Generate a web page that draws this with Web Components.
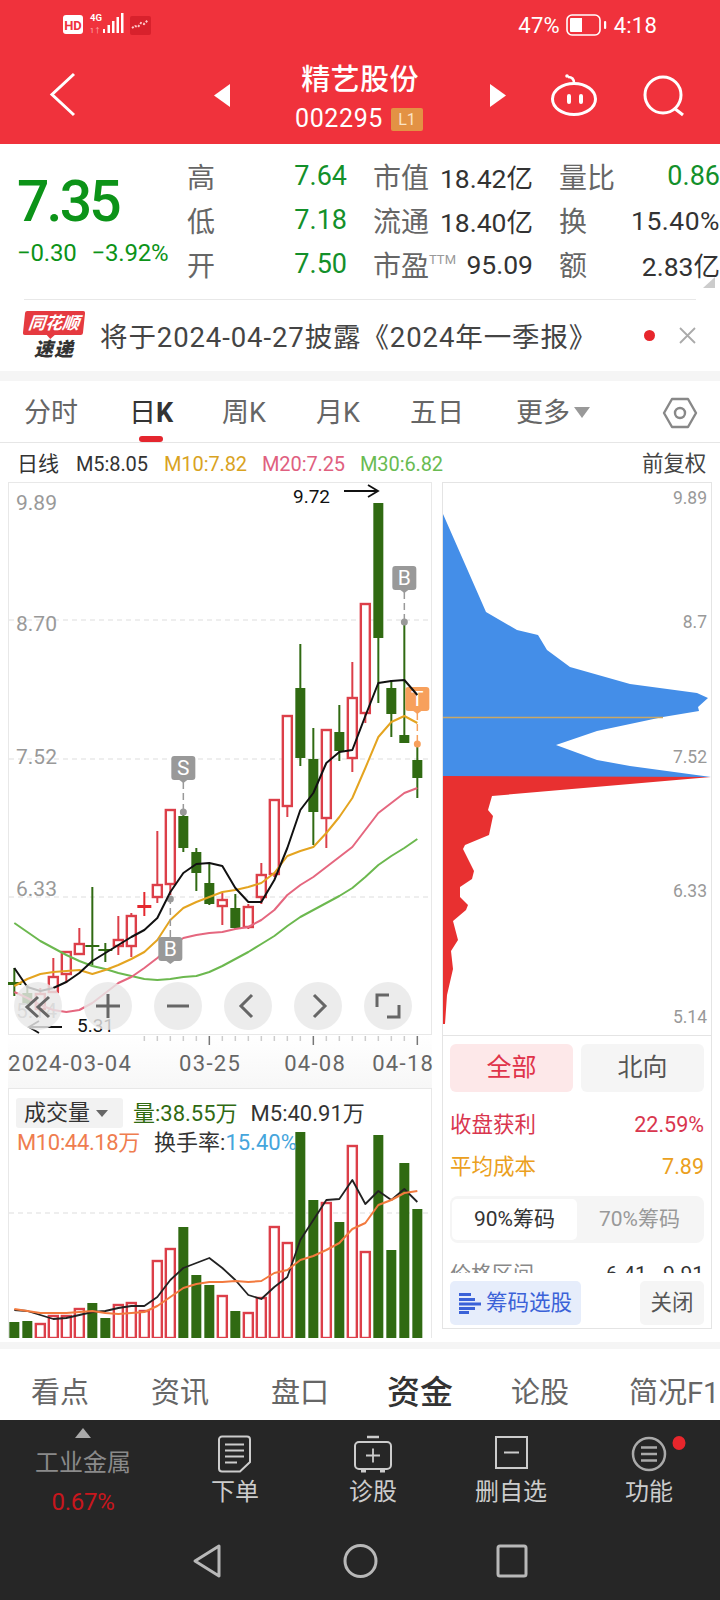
<!DOCTYPE html>
<html lang="zh">
<head>
<meta charset="utf-8">
<title>精艺股份</title>
<style>
  html, body { margin: 0; padding: 0; background: #fff; }
  body {
    width: 720px;
    height: 1600px;
    overflow: hidden;
    font-family: Roboto, "Noto Sans CJK SC", sans-serif;
    color: #333;
    display: flex;
    flex-direction: column;
  }
</style>
</head>
<body>
  <stock-header name="精艺股份" code="002295"></stock-header>
  <quote-panel></quote-panel>
  <notice-bar>将于2024-04-27披露《2024年一季报》</notice-bar>
  <gray-strip height="10"></gray-strip>
  <period-tabs></period-tabs>
  <ma-legend></ma-legend>
  <chart-area>
    <kline-chart slot="left"></kline-chart>
    <date-axis slot="left"></date-axis>
    <volume-chart slot="left"></volume-chart>
    <chip-panel slot="right"></chip-panel>
  </chart-area>
  <gray-strip height="7"></gray-strip>
  <detail-tabs></detail-tabs>
  <bottom-bar></bottom-bar>

<script>
const GREEN = '#306a12';
const RED = '#dc3f49';

function define(name, html, init) {
  const template = document.createElement('template');
  template.innerHTML = html;
  customElements.define(name, class extends HTMLElement {
    constructor() {
      super();
      this.attachShadow({ mode: 'open' });
      this.shadowRoot.appendChild(template.content.cloneNode(true));
    }
    connectedCallback() {
      if (init) init(this.shadowRoot, this);
    }
  });
}

const X = i => 14.33 + 13 * i;
const line = (ys, color, width) =>
  `<polyline points="${ys.map((y, i) => X(i) + ',' + y).join(' ')}" fill="none" stroke="${color}" stroke-width="${width}" stroke-linejoin="round"/>`;
const dashed = (y, x1, x2) =>
  `<line x1="${x1}" x2="${x2}" y1="${y}" y2="${y}" stroke="#ddd" stroke-width="1" stroke-dasharray="5 4"/>`;

// type, high, body top, body bottom, low (page pixels)
const candles = [
  ['g', 968, 982, 985, 996], ['g', 985, 993, 1003, 1004], ['r', 988, 993, 1010, 1012],
  ['r', 958, 976, 993, 993], ['r', 951, 951, 975, 983], ['r', 928, 943, 955, 955],
  ['g', 887, 945, 947, 965], ['g', 943, 949, 951, 962], ['r', 916, 939, 947, 955],
  ['r', 913, 915, 947, 957], ['s', 892, 905, 908, 916], ['r', 831, 884, 898, 903],
  ['r', 809, 809, 885, 895], ['g', 812, 816, 848, 852], ['g', 848, 852, 873, 891],
  ['g', 863, 883, 904, 905], ['r', 893, 899, 907, 925], ['g', 894, 908, 928, 929],
  ['r', 904, 906, 928, 929], ['r', 863, 874, 898, 904], ['r', 799, 799, 875, 877],
  ['r', 715, 715, 807, 817], ['g', 644, 688, 758, 766], ['g', 728, 759, 812, 845],
  ['r', 729, 729, 819, 848], ['g', 705, 732, 751, 761], ['r', 662, 697, 759, 772],
  ['r', 603, 603, 714, 723], ['g', 503, 503, 638, 703], ['g', 680, 688, 714, 737],
  ['g', 623, 735, 743, 743], ['g', 744, 760, 778, 798],
];
const ma5 = [968,987,991,988,982,973,961,953,945,937,930,918,892,873,864,863,866,888,902,902,880,848,810,793,763,752,750,716,683,681,680,695];
const ma10 = [986,979,974,972,971,970,974,970,965,959,952,940,920,908,902,897,892,890,887,883,873,856,851,847,833,817,798,768,737,722,716,723];
const ma20 = [992,998,1005,1010,1012,1010,1003,993,983,977,968,958,947,938,935,933,932,929,927,920,910,895,885,877,867,857,847,830,813,803,793,788];
const ma30 = [923,932,941,948,955,961,966,969,973,976,979,980,979,977,976,972,966,959,952,944,936,926,917,910,903,896,888,877,865,856,848,839];

function candleSvg([type, high, top, bottom, low], i) {
  const x = X(i);
  if (type === 'r') {
    return `<path d="M${x} ${high}V${top}M${x} ${bottom}V${low}" stroke="${RED}" stroke-width="2"/>` +
      `<rect x="${x - 4.5}" y="${top + 1}" width="9" height="${bottom - top - 2}" fill="#fff" stroke="${RED}" stroke-width="2.4"/>`;
  }
  const color = type === 'g' ? GREEN : '#e4282e';
  const w = bottom - top < 5 ? 14 : 10;
  return `<path d="M${x} ${high}V${low}" stroke="${color}" stroke-width="2"/>` +
    `<rect x="${x - w / 2}" y="${top}" width="${w}" height="${bottom - top}" fill="${color}"/>`;
}

// grey or orange flag with a dashed stem to a dot
function flag(x, boxTop, label, color, stemFrom, dot) {
  return `<path d="M${x} ${stemFrom}V${dot}" stroke="${color}" stroke-width="1.5" stroke-dasharray="7 4"/>` +
    `<circle cx="${x}" cy="${dot}" r="3.5" fill="${color}"/>` +
    `<rect x="${x - 12}" y="${boxTop}" width="24" height="24" rx="3" fill="${color}"/>` +
    `<path d="M${x - 4} ${boxTop + 24}H${x + 4}L${x} ${boxTop + 27}Z" fill="${color}"/>` +
    `<text x="${x}" y="${boxTop + 19}" text-anchor="middle" font-size="21" fill="#fff">${label}</text>`;
}

define('gray-strip', `
  <style>:host { display: block; background: #f5f5f5; flex: none; }</style>
`, (root, el) => { el.style.height = el.getAttribute('height') + 'px'; });

define('stock-header', `
  <style>
    :host { display: block; flex: none; height: 144px; background: #f0323c; color: #fff; position: relative; }
    #status { height: 50px; display: flex; align-items: center; padding: 0 63px; position: relative; }
    #status svg { display: block; }
    #right { margin-left: auto; display: flex; align-items: center; font-size: 22px; margin-right: 0; }
    #right span { letter-spacing: .2px; }
    #nav { height: 94px; position: relative; display: flex; justify-content: center; }
    #title { text-align: center; padding-top: 9px; }
    #name { font-size: 29px; font-weight: 500; line-height: 42px; letter-spacing: .4px; }
    #code { font-size: 25px; line-height: 36px; display: flex; align-items: center; justify-content: center; gap: 8px; letter-spacing: .6px; margin-left: -2px; }
    #badge { width: 32px; height: 23px; background: #e39244; color: #fbe3c6; font-size: 16px; line-height: 23px; border-radius: 2px; text-align: center; letter-spacing: 0; }
    .icons { position: absolute; left: 0; top: 0; pointer-events: none; }
  </style>
  <div id="status">
    <svg width="95" height="26" viewBox="0 0 95 26">
      <rect x="0" y="3" width="20" height="19" rx="3" fill="#fff"/>
      <text x="10" y="17.5" text-anchor="middle" font-size="13" font-weight="700" fill="#f0323c">HD</text>
      <text x="27" y="9" font-size="9.5" font-weight="700" fill="#fff">4G</text>
      <text x="27" y="21" font-size="7" fill="#ffb9bd">1↑</text>
      <rect x="40" y="17" width="2" height="4" fill="#fff"/>
      <rect x="44.5" y="13" width="2.5" height="8" fill="#fff"/>
      <rect x="49" y="9" width="2.5" height="12" fill="#fff"/>
      <rect x="53.5" y="5" width="2.5" height="16" fill="#fff"/>
      <rect x="58" y="1" width="2.5" height="20" fill="#fff"/>
      <rect x="67" y="4" width="21" height="19" rx="2" fill="#d8212c"/>
      <path d="M69 16l3-2 3 1 3-4 3 1 4-4" fill="none" stroke="#ffc9c9" stroke-width="2" stroke-dasharray="2 1.5"/>
    </svg>
    <div id="right">
      <span>47%</span>
      <svg width="42" height="22" viewBox="0 0 42 22" style="margin:0 6px 0 6px">
        <rect x="1" y="1" width="33" height="20" rx="5" fill="none" stroke="#fff" stroke-width="1.6"/>
        <path d="M5 4h11v14H5a1 1 0 0 1-1-1V5a1 1 0 0 1 1-1z" fill="#fff"/>
        <rect x="38" y="7" width="2.2" height="8" rx="1" fill="#fff"/>
      </svg>
      <span>4:18</span>
    </div>
  </div>
  <div id="nav">
    <svg class="icons" width="720" height="94" viewBox="0 50 720 94">
      <path d="M74 74L52 94.500L74 115" fill="none" stroke="#fff" stroke-width="3"/>
      <path d="M230 84V107L214 95.500Z" fill="#fff"/>
      <path d="M490 84V107L506 95.500Z" fill="#fff"/>
      <ellipse cx="574" cy="99" rx="21.500" ry="15.500" fill="none" stroke="#fff" stroke-width="3"/>
      <path d="M574 83C574 79 572 77 568 77" fill="none" stroke="#fff" stroke-width="2.500"/>
      <circle cx="567" cy="76" r="1.800" fill="#fff"/>
      <path d="M569 96v6M581 96v6" stroke="#fff" stroke-width="4" stroke-linecap="round"/>
      <circle cx="663" cy="95" r="18" fill="none" stroke="#fff" stroke-width="3"/>
      <path d="M674 108L683 115" stroke="#fff" stroke-width="3"/>
    </svg>
    <div id="title">
      <div id="name"></div>
      <div id="code"><span id="num"></span><span id="badge">L1</span></div>
    </div>
  </div>
`, (root, el) => {
  root.getElementById('name').textContent = el.getAttribute('name');
  root.getElementById('num').textContent = el.getAttribute('code');
});

define('quote-panel', `
  <style>
    :host { display: flex; flex: none; height: 155px; position: relative; box-sizing: border-box; padding-top: 10px; }
    #price { width: 187px; padding-left: 17px; box-sizing: border-box; color: #0c9318; }
    #now { font-size: 57px; font-weight: 500; letter-spacing: -2.8px; line-height: 60px; margin-top: 18px; }
    #chg { display: flex; gap: 15px; font-size: 24px; line-height: 26px; margin-top: 8px; letter-spacing: -.2px; white-space: nowrap; }
    #table { display: grid; grid-template-columns: 160px 160px 161px; column-gap: 26px; grid-auto-rows: 44px; }
    .cell { display: flex; justify-content: space-between; align-items: center; white-space: nowrap; }
    .k { font-size: 28px; color: #666; }
    .k sup { font-size: 13px; color: #999; vertical-align: 12px; line-height: 0; }
    .v { font-size: 26.500px; color: #333; }
    .g { color: #13902a; font-size: 27px; }
    #corner { position: absolute; right: 5px; bottom: 11px; width: 0; height: 0; border-left: 12px solid transparent; border-bottom: 11px solid #ccc; }
  </style>
  <div id="price">
    <div id="now">7.35</div>
    <div id="chg"><span>−0.30</span><span>−3.92%</span></div>
  </div>
  <div id="table">
    <div class="cell"><span class="k">高</span><span class="v g">7.64</span></div>
    <div class="cell"><span class="k">市值</span><span class="v">18.42亿</span></div>
    <div class="cell"><span class="k">量比</span><span class="v g">0.86</span></div>
    <div class="cell"><span class="k">低</span><span class="v g">7.18</span></div>
    <div class="cell"><span class="k">流通</span><span class="v">18.40亿</span></div>
    <div class="cell"><span class="k">换</span><span class="v" style="letter-spacing:.5px">15.40%</span></div>
    <div class="cell"><span class="k">开</span><span class="v g">7.50</span></div>
    <div class="cell"><span class="k">市盈<sup>TTM</sup></span><span class="v">95.09</span></div>
    <div class="cell"><span class="k">额</span><span class="v">2.83亿</span></div>
  </div>
  <div id="corner"></div>
`);

define('notice-bar', `
  <style>
    :host { display: flex; flex: none; height: 72px; margin: 0 24px; border-top: 1px solid #e8e8e8; box-sizing: border-box; align-items: center; position: relative; }
    #logo { width: 60px; flex: none; margin-right: 16px; text-align: center; }
    #top { position: relative; height: 24px; background: #e53a40; color: #fff; font-size: 17px; line-height: 24px; font-weight: 700; font-style: italic; transform: skewX(-6deg); border-radius: 2px; white-space: nowrap; }
    #top:after { content: ""; position: absolute; left: 24px; top: 24px; border: 4px solid transparent; border-top-color: #e53a40; border-bottom: 0; }
    #bottom { font-size: 19px; line-height: 20px; margin-top: 5px; font-weight: 900; font-style: italic; color: #333; letter-spacing: 1px; }
    #text { font-size: 27.500px; color: #444; white-space: nowrap; flex: 1; letter-spacing: .9px; padding-bottom: 2px; }
    #dot { width: 11px; height: 11px; border-radius: 50%; background: #e7262c; margin-right: 24px; }
    svg { display: block; }
  </style>
  <div id="logo"><div id="top">同花顺</div><div id="bottom">速递</div></div>
  <div id="text"><slot></slot></div>
  <div id="dot"></div>
  <svg width="17" height="17" viewBox="0 0 17 17"><path d="M1 1L16 16M16 1L1 16" stroke="#aaa" stroke-width="1.800"/></svg>
`);

define('period-tabs', `
  <style>
    :host { display: flex; flex: none; height: 62px; box-sizing: border-box; border-bottom: 1px solid #e6e6e6; font-size: 27px; color: #666; align-items: center; position: relative; }
    span { position: absolute; top: 13px; line-height: 38px; white-space: nowrap; }
    b { color: #333; font-weight: 700; }
    i { position: absolute; left: 139px; bottom: 0; width: 24px; height: 6px; border-radius: 3px; background: #e4262e; }
    em { display: inline-block; width: 0; height: 0; border: 8px solid transparent; border-top: 11px solid #999; border-bottom: 0; margin-left: 4px; vertical-align: 4px; }
    svg { position: absolute; left: 662px; top: 15px; }
  </style>
  <span style="left:24px">分时</span>
  <span style="left:129px;color:#333">日<b>K</b></span>
  <span style="left:222px">周K</span>
  <span style="left:316px">月K</span>
  <span style="left:410px">五日</span>
  <span style="left:516px">更多<em></em></span>
  <i></i>
  <svg width="36" height="34" viewBox="0 0 36 34" fill="none" stroke="#888" stroke-width="2.400"><path d="M10 3H26L34 17L26 31H10L2 17Z" stroke-linejoin="round"/><circle cx="18" cy="17" r="5"/></svg>
`);

define('ma-legend', `
  <style>
    :host { display: flex; flex: none; height: 39px; align-items: center; font-size: 20px; position: relative; white-space: nowrap; letter-spacing: -.1px; color: #333; }
    span { position: absolute; top: 9px; line-height: 24px; }
  </style>
  <span style="left:17px;font-size:21px">日线</span>
  <span style="left:76px">M5:8.05</span>
  <span style="left:164px;color:#d9a31f">M10:7.82</span>
  <span style="left:262px;color:#e0607f">M20:7.25</span>
  <span style="left:360px;color:#69bb52">M30:6.82</span>
  <span style="left:642px;font-size:21.500px;color:#444">前复权</span>
`);

define('chart-area', `
  <style>
    :host { display: flex; flex: none; height: 860px; padding-left: 8px; }
    #left { width: 424px; display: flex; flex-direction: column; }
    #right { width: 270px; margin-left: 10px; }
  </style>
  <div id="left"><slot name="left"></slot></div>
  <div id="right"><slot name="right"></slot></div>
`);

const roundBtn = inner =>
  `<div class="btn"><svg width="48" height="48" viewBox="0 0 48 48" fill="none" stroke="#666" stroke-width="2.500">${inner}</svg></div>`;

define('kline-chart', `
  <style>
    :host { display: block; flex: none; height: 553px; position: relative; box-sizing: border-box; }
    svg#c { display: block; position: absolute; left: 0; top: 0; font-family: Roboto, sans-serif; }
    #btns { position: absolute; left: 6px; top: 500px; display: flex; gap: 22px; }
    .btn { width: 48px; height: 48px; border-radius: 50%; background: rgba(232,232,232,.82); }
    .btn svg { display: block; }
  </style>
  <svg id="c" width="424" height="553" viewBox="8 482 424 553"></svg>
  <div id="btns">
    ${roundBtn('<path d="M24 15L13 25L24 35M35 15L24 25L35 35" stroke-width="3"/>')}
    ${roundBtn('<path d="M12 24H36M24 12V36" stroke-width="3"/>')}
    ${roundBtn('<path d="M13 24H35" stroke-width="3"/>')}
    ${roundBtn('<path d="M28 13L17 24L28 35" stroke-width="3"/>')}
    ${roundBtn('<path d="M20 13L31 24L20 35" stroke-width="3"/>')}
    ${roundBtn('<path d="M25 13H13V25M35 23V35H23" stroke-width="3"/>')}
  </div>
`, root => {
  const labels = [['9.89', 510], ['8.70', 631], ['7.52', 764], ['6.33', 896], ['5.14', 1018]];
  root.getElementById('c').innerHTML =
    `<rect x="8.500" y="482.500" width="423" height="552" fill="#fff" stroke="#e8e8e8"/>` +
    [620, 759, 897].map(y => dashed(y, 9, 431)).join('') +
    labels.map(([t, y]) => `<text x="16" y="${y}" font-size="21" fill="#999">${t}</text>`).join('') +
    candles.map(candleSvg).join('') +
    line(ma30, '#6cb84f', 2) + line(ma20, '#e5677f', 2) + line(ma10, '#e4a420', 2) +
    flag(X(12), 937, 'B', '#999', 937, 899) + flag(X(13), 756, 'S', '#999', 782, 812) +
    flag(X(30), 566, 'B', '#999', 592, 622) + flag(X(31), 687, 'T', '#f7a05c', 713, 744) +
    line(ma5, '#111', 2) +
    `<text x="293" y="503" font-size="19" fill="#111">9.72</text>
     <path d="M344 491H378M368 485L378 491L368 497" fill="none" stroke="#111" stroke-width="1.800"/>
     <text x="77" y="1032" font-size="19" fill="#111">5.31</text>
     <path d="M62 1027H29M39 1021L29 1027L39 1033" fill="none" stroke="#111" stroke-width="1.800"/>`;
});

define('date-axis', `
  <style>
    :host { display: block; flex: none; height: 53px; background: linear-gradient(#fff, #f7f7f7); position: relative; }
    svg { position: absolute; left: 0; top: 0; display: block; }
    #dates { display: flex; padding-top: 14px; font-size: 22px; line-height: 30px; color: #666; letter-spacing: 1.300px; white-space: nowrap; }
  </style>
  <svg id="t" width="424" height="12" viewBox="8 1035 424 12"></svg>
  <div id="dates">
    <span>2024-03-04</span>
    <span style="margin-left:47px">03-25</span>
    <span style="margin-left:43px">04-08</span>
    <span style="margin-left:26px">04-18</span>
  </div>
`, root => {
  let ticks = '';
  for (let i = 10; i < 32; i++) {
    const major = (i - 31) % 8 === 0;
    ticks += `<line x1="${X(i)}" x2="${X(i)}" y1="1036" y2="${major ? 1045 : 1041}" stroke="${major ? '#777' : '#ccc'}" stroke-width="1.500"/>`;
  }
  root.getElementById('t').innerHTML = ticks;
});

const volumes = [1322,1321,1323,1315,1315,1308,1303,1318,1304,1302,1310,1260,1248,1227,1275,1285,1295,1311,1312,1297,1226,1242,1132,1200,1202,1222,1145,1251,1135,1250,1163,1209];
const volUp = [0,0,1,1,1,1,0,0,1,1,1,1,1,0,0,0,1,0,1,1,1,1,0,0,1,0,1,1,0,0,0,0];
const volMa5 = [1310,1311,1315,1319,1318,1315,1312,1311,1308,1306,1306,1297,1280,1268,1263,1258,1268,1280,1295,1299,1287,1277,1240,1220,1200,1199,1180,1204,1191,1200,1189,1202];
const volMa10 = [1309,1311,1313,1313,1313,1312,1311,1313,1314,1313,1312,1306,1297,1288,1284,1282,1282,1281,1282,1281,1273,1270,1260,1256,1250,1243,1229,1223,1205,1200,1193,1191];

define('volume-chart', `
  <style>
    :host { display: block; flex: none; height: 250px; position: relative; }
    svg { position: absolute; left: 0; top: 0; display: block; }
    #info { position: absolute; left: 8px; top: 9px; right: 0; font-size: 22px; white-space: nowrap; color: #333; line-height: 30px; }
    #row1, #row2 { display: flex; align-items: center; }
    #row1 span { padding-top: 2px; }
    #chip { width: 107px; height: 30px; background: #f2f2f2; border-radius: 3px; box-sizing: border-box; padding-left: 8px; margin-right: 10px; display: flex; align-items: center; }
    #chip i { margin-left: 6px; border: 6px solid transparent; border-top: 7px solid #666; border-bottom: 0; }
    #row2 { margin-top: -1px; padding-left: 1px; }
  </style>
  <svg id="v" width="424" height="250" viewBox="8 1088 424 250"></svg>
  <div id="info">
    <div id="row1">
      <div id="chip">成交量<i></i></div>
      <span style="color:#306a12">量:38.55万</span>
      <span style="margin-left:13px">M5:40.91万</span>
    </div>
    <div id="row2">
      <span style="color:#ef7d4f;letter-spacing:-.35px">M10:44.18万</span>
      <span style="margin-left:14px">换手率:<span style="color:#45a5dc">15.40%</span></span>
    </div>
  </div>
`, root => {
  root.getElementById('v').innerHTML =
    `<rect x="8.500" y="1088.500" width="423" height="260" fill="#fff" stroke="#e8e8e8"/>` +
    dashed(1213, 9, 431) +
    volumes.map((y, i) => volUp[i]
      ? `<rect x="${X(i) - 4.5}" y="${y + 1}" width="9" height="${1337 - y}" fill="#fff" stroke="${RED}" stroke-width="2.4"/>`
      : `<rect x="${X(i) - 5}" y="${y}" width="10" height="${1338 - y}" fill="${GREEN}"/>`).join('') +
    line(volMa5, '#222', 1.8) + line(volMa10, '#f27a3e', 2);
});

const bluePts = '443,514 486,612 517,630 538,635 547,650 570,667 630,684 697,693 708,698 698,707 699,711 663,717 597,731 556,745 597,760 630,766 711,777 443,777';
const redPts = '443,776 711,777 630,784 492,796 488,810 493,816 489,835 465,845 463,849 474,871 472,879 460,887 460,897 468,905 466,910 453,921 458,940 451,951 453,969 447,995 445,1024 443,1024';

define('chip-panel', `
  <style>
    :host { display: block; height: 847px; box-sizing: border-box; border: 1px solid #e4e4e4; position: relative; }
    svg#d { display: block; height: 552px; border-bottom: 1px solid #e4e4e4; }
    #body { padding: 8px 7px 0 7px; }
    #scope { display: flex; gap: 8px; }
    #scope div { flex: 1; height: 48px; line-height: 48px; text-align: center; font-size: 25px; border-radius: 6px; background: #f5f5f5; color: #555; }
    #scope .on { background: #fde8e9; color: #e0334a; }
    .row { display: flex; justify-content: space-between; font-size: 21.500px; height: 42px; line-height: 42px; white-space: nowrap; }
    #seg { display: flex; height: 47px; background: #f5f5f5; border-radius: 8px; margin-top: 8px; box-sizing: border-box; padding: 3px 2px; font-size: 21px; color: #999; line-height: 41px; text-align: center; }
    #seg div { flex: 1; border-radius: 5px; }
    #seg .on { background: #fff; color: #333; }
    #clip { height: 30px; overflow: hidden; margin-top: 0; }
    #clip .row { height: 42px; margin-top: 10px; color: #888; font-size: 21px; }
    #foot { display: flex; justify-content: space-between; margin-top: 8px; }
    #foot div { height: 44px; line-height: 44px; border-radius: 5px; font-size: 21.500px; text-align: center; }
    #pick { width: 131px; background: #e6edfb; color: #3b62d8; display: flex; align-items: center; justify-content: center; gap: 5px; }
    #close { width: 64px; background: #f5f5f5; color: #555; }
  </style>
  <svg id="d" width="268" height="552" viewBox="443 483 268 552"></svg>
  <div id="body">
    <div id="scope"><div class="on">全部</div><div>北向</div></div>
    <div class="row" style="margin-top:12px;color:#d9364e"><span>收盘获利</span><span>22.59%</span></div>
    <div class="row" style="color:#eba020"><span>平均成本</span><span>7.89</span></div>
    <div id="seg"><div class="on">90%筹码</div><div>70%筹码</div></div>
    <div id="clip"><div class="row"><span>价格区间</span><span style="color:#333">6.41 - 9.91</span></div></div>
    <div id="foot">
      <div id="pick"><svg width="22" height="21" viewBox="0 0 22 21"><path d="M0 1.500H12M0 6.500H16M0 11H22M0 15.500H16M0 19.500H10" stroke="#3b62d8" stroke-width="3"/></svg><span>筹码选股</span></div>
      <div id="close">关闭</div>
    </div>
  </div>
`, root => {
  const labels = [['9.89', 504], ['8.7', 628], ['7.52', 763], ['6.33', 897], ['5.14', 1023]];
  root.getElementById('d').innerHTML =
    `<polygon points="${bluePts}" fill="#448ee8"/>
     <line x1="443" x2="663" y1="717.500" y2="717.500" stroke="#c9a866" stroke-width="1.500"/>
     <polygon points="${redPts}" fill="#e83030"/>` +
    labels.map(([t, y]) => `<text x="707" y="${y}" text-anchor="end" font-size="17.500" fill="#999" font-family="Roboto, sans-serif">${t}</text>`).join('');
});

define('detail-tabs', `
  <style>
    :host { display: flex; flex: none; height: 71px; align-items: center; overflow: hidden; font-size: 29px; color: #666; white-space: nowrap; padding-top: 10px; box-sizing: border-box; }
    span { width: 120px; flex: none; text-align: center; }
    b { width: 120px; flex: none; text-align: center; color: #333; font-size: 33px; font-weight: 500; }
    .last { text-align: left; margin-left: 29px; }
  </style>
  <span>看点</span><span>资讯</span><span>盘口</span><b>资金</b><span>论股</span><span class="last">简况F1</span>
`);

define('nav-item', `
  <style>
    :host { display: flex; flex-direction: column; align-items: center; width: 138px; flex: none; position: relative; color: #ccc; font-size: 24px; }
    #icon { height: 40px; margin-top: 15px; }
    #label { line-height: 30px; margin-top: 2px; white-space: nowrap; }
  </style>
  <div id="icon"><slot name="icon"></slot></div>
  <div id="label"><slot></slot></div>
`);

define('bottom-bar', `
  <style>
    :host { display: block; flex: none; height: 180px; background: #262626; }
    #items { display: flex; height: 110px; }
    #sector { width: 166px; flex: none; text-align: center; color: #8a8a8a; font-size: 24px; white-space: nowrap; }
    #sector i { display: block; width: 0; height: 0; margin: 8px auto 0; border: 8px solid transparent; border-bottom: 10px solid #aaa; border-top: 0; }
    #sector div { line-height: 34px; margin-top: 8px; }
    #sector p { margin: 7px 0 0; color: #c8161d; line-height: 30px; letter-spacing: -.3px; }
    svg { display: block; }
    #sys { display: flex; justify-content: center; align-items: center; height: 62px; margin-top: 0; }
    #sys svg { display: block; }
  </style>
  <div id="items">
    <div id="sector"><i></i><div>工业金属</div><p>0.67%</p></div>
    <nav-item>
      <svg slot="icon" width="34" height="38" viewBox="0 0 34 38" fill="none" stroke="#ccc" stroke-width="2"><path d="M4 1.500H29a3 3 0 0 1 3 3V27L22 36.500H4a3 3 0 0 1-3-3V4.500a3 3 0 0 1 3-3Z"/><path d="M7 9.500H26M7 15.500H26M7 21.500H26M7 27.500H19"/></svg>
      下单
    </nav-item>
    <nav-item>
      <svg slot="icon" width="40" height="38" viewBox="0 0 40 38" fill="none" stroke="#ccc" stroke-width="2"><path d="M14 2H26" stroke-width="2.500"/><rect x="2" y="7" width="36" height="27" rx="4"/><path d="M13 20.500H27M20 13.500V27.500" stroke-width="1.800"/><path d="M8 36H13M27 36H32" stroke-width="3"/></svg>
      诊股
    </nav-item>
    <nav-item>
      <svg slot="icon" width="33" height="36" viewBox="0 0 33 36" fill="none" stroke="#ccc" stroke-width="2"><rect x="1" y="2" width="31" height="31"/><path d="M9 17.500H24"/></svg>
      删自选
    </nav-item>
    <nav-item>
      <svg slot="icon" width="62" height="38" viewBox="0 0 62 38" fill="none" stroke="#aaa" stroke-width="2.500"><circle cx="31" cy="19" r="16"/><path d="M23 12.500H39M23 19H39M23 25.500H39"/></svg>
      功能
      <svg style="position:absolute;left:92px;top:15px" width="14" height="16" viewBox="0 0 14 16"><ellipse cx="7" cy="8" rx="6.500" ry="7" fill="#e8262c"/></svg>
    </nav-item>
  </div>
  <div id="sys">
    <svg width="337" height="36" viewBox="0 0 337 36" fill="none" stroke="#b8b8b8" stroke-width="3">
      <path d="M27 3L3 18L27 33Z" stroke-linejoin="round"/>
      <circle cx="168.500" cy="18" r="15.500"/>
      <rect x="306" y="3" width="28" height="30" rx="2"/>
    </svg>
  </div>
`);
</script>
</body>
</html>
